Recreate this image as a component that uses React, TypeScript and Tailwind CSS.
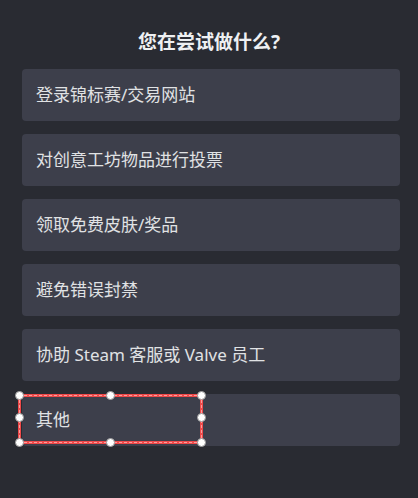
import React from "react";

const items = [
  "登录锦标赛/交易网站",
  "对创意工坊物品进行投票",
  "领取免费皮肤/奖品",
  "避免错误封禁",
  "协助 Steam 客服或 Valve 员工",
  "其他",
];

function Handle({ className }: { className: string }) {
  return (
    <div
      className={`absolute w-[9px] h-[9px] rounded-full bg-white border border-[#9a9a9a] ${className}`}
    />
  );
}

export default function App() {
  return (
    <div
      className="w-[418px] h-[498px] bg-[#292b32] flex flex-col"
      style={{ fontFamily: '"Noto Sans", "Noto Sans CJK SC", sans-serif' }}
    >
      <div className="pt-[29px] pb-[13px] text-center text-[19px] leading-[27px] font-bold text-[#eef0f2]">
        您在尝试做什么?
      </div>
      <div className="pl-[22px] pr-[18px] flex flex-col gap-[13px]">
        {items.map((t, i) => (
          <div
            key={i}
            className="relative h-[52px] rounded-[4px] bg-[#3d3f4b] flex items-center pl-[14px] text-[17px] text-[#e0e2e4]"
          >
            {t}
            {i === items.length - 1 && (
              <div className="absolute left-[-4px] top-0 w-[185px] h-[50px] border-[3px] border-[#ef4a4a]">
                <div className="absolute inset-[-2px] border border-dashed border-[#f7a0a0]" />
                <Handle className="left-[-6px] top-[-6px]" />
                <Handle className="left-[85px] top-[-6px]" />
                <Handle className="right-[-6px] top-[-6px]" />
                <Handle className="left-[-6px] top-[16px]" />
                <Handle className="right-[-6px] top-[16px]" />
                <Handle className="left-[-6px] bottom-[-6px]" />
                <Handle className="left-[85px] bottom-[-6px]" />
                <Handle className="right-[-6px] bottom-[-6px]" />
              </div>
            )}
          </div>
        ))}
      </div>
    </div>
  );
}
